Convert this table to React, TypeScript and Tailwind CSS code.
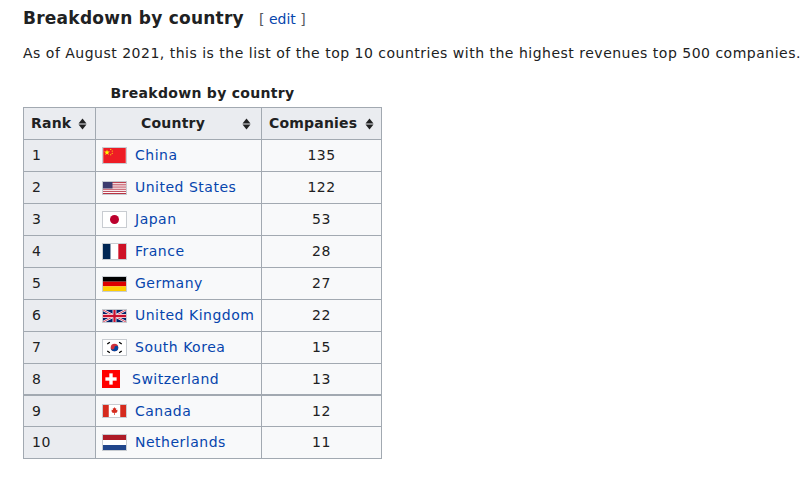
import React from "react";

const Sort = () => (
  <svg width="9" height="12" viewBox="0 0 9 12" className="inline-block">
    <path d="M4.5 0.5 L8.5 5.5 L0.5 5.5 Z" fill="#202122" />
    <path d="M0.5 6.5 L8.5 6.5 L4.5 11.5 Z" fill="#202122" />
  </svg>
);

const China = () => (
  <svg width="23" height="15" viewBox="0 0 30 20">
    <rect width="30" height="20" fill="#ee1c25" />
    <polygon points="5,2 5.9,4.8 8.8,4.8 6.5,6.5 7.4,9.3 5,7.6 2.6,9.3 3.5,6.5 1.2,4.8 4.1,4.8" fill="#ffff00" />
    <circle cx="10" cy="2" r="0.8" fill="#ffff00" />
    <circle cx="12" cy="4" r="0.8" fill="#ffff00" />
    <circle cx="12" cy="7" r="0.8" fill="#ffff00" />
    <circle cx="10" cy="9" r="0.8" fill="#ffff00" />
  </svg>
);

const US = () => {
  const stripes = [];
  for (let i = 0; i < 13; i++) {
    stripes.push(
      <rect key={i} y={(i * 12) / 13} width="23" height={12 / 13} fill={i % 2 === 0 ? "#b22234" : "#ffffff"} />
    );
  }
  return (
    <svg width="23" height="12" viewBox="0 0 23 12">
      {stripes}
      <rect width="9.5" height={(7 * 12) / 13} fill="#3c3b6e" />
    </svg>
  );
};

const Japan = () => (
  <svg width="23" height="15" viewBox="0 0 23 15">
    <rect width="23" height="15" fill="#ffffff" />
    <circle cx="11.5" cy="7.5" r="4.5" fill="#bc002d" />
  </svg>
);

const France = () => (
  <svg width="23" height="15" viewBox="0 0 3 2" preserveAspectRatio="none">
    <rect width="1" height="2" fill="#002654" />
    <rect x="1" width="1" height="2" fill="#ffffff" />
    <rect x="2" width="1" height="2" fill="#ce1126" />
  </svg>
);

const Germany = () => (
  <svg width="23" height="14" viewBox="0 0 5 3" preserveAspectRatio="none">
    <rect width="5" height="1" fill="#000000" />
    <rect y="1" width="5" height="1" fill="#dd0000" />
    <rect y="2" width="5" height="1" fill="#ffce00" />
  </svg>
);

const UK = () => (
  <svg width="23" height="12" viewBox="0 0 60 30" preserveAspectRatio="none">
    <rect width="60" height="30" fill="#012169" />
    <path d="M0,0 L60,30 M60,0 L0,30" stroke="#ffffff" strokeWidth="6" />
    <path d="M0,0 L60,30 M60,0 L0,30" stroke="#c8102e" strokeWidth="2" />
    <path d="M30,0 V30 M0,15 H60" stroke="#ffffff" strokeWidth="10" />
    <path d="M30,0 V30 M0,15 H60" stroke="#c8102e" strokeWidth="6" />
  </svg>
);

const Korea = () => (
  <svg width="23" height="15" viewBox="0 0 36 24">
    <rect width="36" height="24" fill="#ffffff" />
    <circle cx="18" cy="12" r="6" fill="#cd2e3a" />
    <path d="M12,12 A6,6 0 0 0 24,12 A3,3 0 0 0 18,12 A3,3 0 0 1 12,12 Z" fill="#0047a0" />
    <g fill="#000000">
      <rect x="6" y="4" width="5" height="2" transform="rotate(-34 8.5 5)" />
      <rect x="25" y="4" width="5" height="2" transform="rotate(34 27.5 5)" />
      <rect x="6" y="18" width="5" height="2" transform="rotate(34 8.5 19)" />
      <rect x="25" y="18" width="5" height="2" transform="rotate(-34 27.5 19)" />
    </g>
  </svg>
);

const Swiss = () => (
  <svg width="18" height="18" viewBox="0 0 32 32">
    <rect width="32" height="32" fill="#ff0000" />
    <rect x="13" y="6" width="6" height="20" fill="#ffffff" />
    <rect x="6" y="13" width="20" height="6" fill="#ffffff" />
  </svg>
);

const Canada = () => (
  <svg width="23" height="12" viewBox="0 0 46 24">
    <rect width="46" height="24" fill="#ffffff" />
    <rect width="11.5" height="24" fill="#d52b1e" />
    <rect x="34.5" width="11.5" height="24" fill="#d52b1e" />
    <path
      d="M23,4 L24.5,7 L26.5,6 L25.8,10.5 L28.5,9 L28,11 L30,11.5 L27,14.5 L27.5,16 L23.7,15.5 L23.7,20 L22.3,20 L22.3,15.5 L18.5,16 L19,14.5 L16,11.5 L18,11 L17.5,9 L20.2,10.5 L19.5,6 L21.5,7 Z"
      fill="#d52b1e"
    />
  </svg>
);

const Netherlands = () => (
  <svg width="23" height="15" viewBox="0 0 9 6" preserveAspectRatio="none">
    <rect width="9" height="2" fill="#ae1c28" />
    <rect y="2" width="9" height="2" fill="#ffffff" />
    <rect y="4" width="9" height="2" fill="#21468b" />
  </svg>
);

type Row = { rank: number; name: string; flag: React.ReactNode; count: number; border?: boolean; square?: boolean; short?: boolean };

const rows: Row[] = [
  { rank: 1, name: "China", flag: <China />, count: 135 },
  { rank: 2, name: "United States", flag: <US />, count: 122 },
  { rank: 3, name: "Japan", flag: <Japan />, count: 53 },
  { rank: 4, name: "France", flag: <France />, count: 28 },
  { rank: 5, name: "Germany", flag: <Germany />, count: 27 },
  { rank: 6, name: "United Kingdom", flag: <UK />, count: 22 },
  { rank: 7, name: "South Korea", flag: <Korea />, count: 15 },
  { rank: 8, name: "Switzerland", flag: <Swiss />, count: 13, border: true, square: true, short: true },
  { rank: 9, name: "Canada", flag: <Canada />, count: 12, short: true },
  { rank: 10, name: "Netherlands", flag: <Netherlands />, count: 11 },
];

export default function App() {
  return (
    <div className="bg-white min-h-[484px] pl-[23px] pt-[6px] text-[#202122] font-['DejaVu_Sans','Verdana',sans-serif]">
      <h3 className="flex items-baseline whitespace-nowrap leading-[24px]">
        <span className="text-[17px] font-bold tracking-[0.25px]">Breakdown by country</span>
        <span className="ml-[15px] text-[14px] font-normal text-[#54595d]">
          [ <span className="text-[#0645ad]">edit</span> ]
        </span>
      </h3>
      <p className="mt-[11px] text-[14px] leading-[22px] whitespace-nowrap tracking-[0.5px]">
        As of August 2021, this is the list of the top 10 countries with the highest revenues top 500 companies.
      </p>
      <table className="mt-[18px] border-collapse border border-[#a2a9b1] bg-[#f8f9fa] text-[14px] leading-[23px]">
        <caption className="font-bold pb-[3px] leading-[22px] tracking-[0.3px]">Breakdown by country</caption>
        <thead>
          <tr className="bg-[#eaecf0] tracking-[0.2px]">
            <th className="w-[72px] border border-[#a2a9b1] pl-[7px] pr-[8px] py-[4px] text-left font-bold">
              <div className="flex items-center justify-between">
                <span>Rank</span>
                <Sort />
              </div>
            </th>
            <th className="w-[166px] border border-[#a2a9b1] pl-[8px] pr-[10px] py-[4px] font-bold">
              <div className="flex items-center justify-between">
                <span className="flex-1 text-center">Country</span>
                <Sort />
              </div>
            </th>
            <th className="w-[120px] border border-[#a2a9b1] pl-[7px] pr-[7px] py-[4px] font-bold">
              <div className="flex items-center justify-between">
                <span>Companies</span>
                <Sort />
              </div>
            </th>
          </tr>
        </thead>
        <tbody className="tracking-[0.5px]">
          {rows.map((r) => (
            <tr key={r.rank} className={r.short ? "leading-[22px]" : ""}>
              <td
                className={`border border-[#a2a9b1] bg-[#eaecf0] pl-[8px] py-[4px] text-left ${
                  r.border ? "border-b-2" : ""
                }`}
              >
                {r.rank}
              </td>
              <td className={`border border-[#a2a9b1] pl-[6px] py-[4px] ${r.border ? "border-b-2" : ""}`}>
                <span className="flex items-center">
                  {r.square ? (
                    <span className="inline-flex">{r.flag}</span>
                  ) : (
                    <span className="inline-flex border border-[#c8ccd1]">{r.flag}</span>
                  )}
                  <a className={`text-[#0645ad] ${r.square ? "ml-[12px]" : "ml-[8px]"}`}>{r.name}</a>
                </span>
              </td>
              <td className={`border border-[#a2a9b1] py-[4px] text-center ${r.border ? "border-b-2" : ""}`}>
                {r.count}
              </td>
            </tr>
          ))}
        </tbody>
      </table>
    </div>
  );
}
